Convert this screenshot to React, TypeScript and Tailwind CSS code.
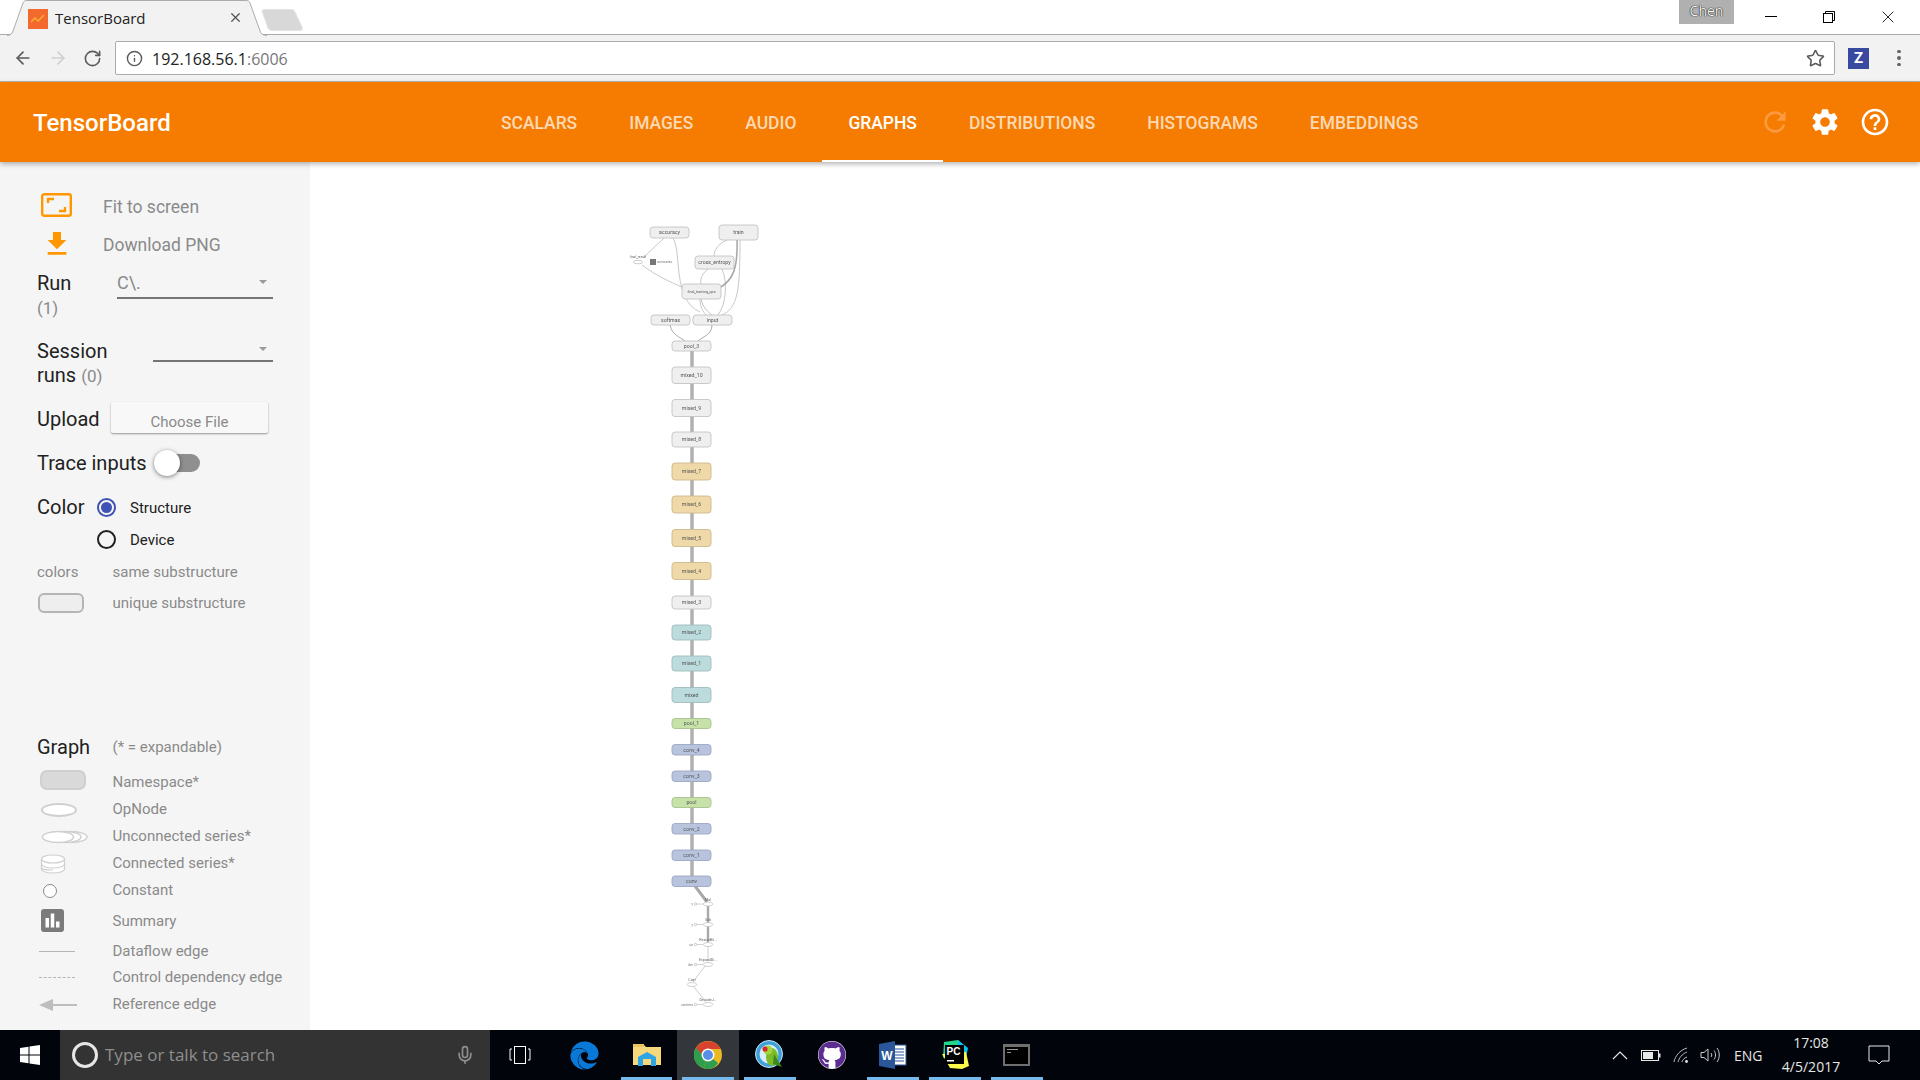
import { ArrowLeft, ArrowRight, Info, Mic, RotateCw, Star, X } from "lucide-react";
import { FaEdge, FaGithub } from "react-icons/fa";
import { MdFileDownload, MdHelpOutline, MdRefresh, MdSettings, MdBarChart } from "react-icons/md";

const tabs = ["SCALARS", "IMAGES", "AUDIO", "GRAPHS", "DISTRIBUTIONS", "HISTOGRAMS", "EMBEDDINGS"];

const white = { fill: "#efefef", stroke: "#c4c4c4" };
const orange = { fill: "#f0d9a8", stroke: "#cdb98d" };
const teal = { fill: "#bcdbdc", stroke: "#9fbcbd" };
const green = { fill: "#c6e2a9", stroke: "#a7c290" };
const blue = { fill: "#b8c3de", stroke: "#9ca7c2" };

// page coordinates, svg viewBox lines up with the page
const nodes = [
  { name: "accuracy", x: 650, y: 227, w: 39, h: 11, c: white },
  { name: "train", x: 719, y: 225, w: 39, h: 15, c: white },
  { name: "cross_entropy", x: 695, y: 256, w: 39, h: 13, c: white },
  { name: "final_training_ops", x: 682, y: 284, w: 39, h: 15, c: white, small: true },
  { name: "softmax", x: 651, y: 315, w: 39, h: 10, c: white },
  { name: "input", x: 693, y: 315, w: 39, h: 10, c: white },
  { name: "pool_3", x: 672, y: 341, w: 39, h: 10, c: white },
  { name: "mixed_10", x: 672, y: 367, w: 39, h: 16.5, c: white },
  { name: "mixed_9", x: 672, y: 399.5, w: 39, h: 17, c: white },
  { name: "mixed_8", x: 672, y: 432, w: 39, h: 15, c: white },
  { name: "mixed_7", x: 672, y: 463, w: 39, h: 17, c: orange },
  { name: "mixed_6", x: 672, y: 496, w: 39, h: 17, c: orange },
  { name: "mixed_5", x: 672, y: 529.5, w: 39, h: 17, c: orange },
  { name: "mixed_4", x: 672, y: 562.5, w: 39, h: 17, c: orange },
  { name: "mixed_3", x: 672, y: 596, w: 39, h: 13, c: white },
  { name: "mixed_2", x: 672, y: 625, w: 39, h: 15, c: teal },
  { name: "mixed_1", x: 672, y: 656, w: 39, h: 15, c: teal },
  { name: "mixed", x: 672, y: 687.5, w: 39, h: 15, c: teal },
  { name: "pool_1", x: 672, y: 718.5, w: 39, h: 10, c: green },
  { name: "conv_4", x: 672, y: 744.5, w: 39, h: 10.5, c: blue },
  { name: "conv_3", x: 672, y: 771, w: 39, h: 10.5, c: blue },
  { name: "pool", x: 672, y: 797.5, w: 39, h: 10, c: green },
  { name: "conv_2", x: 672, y: 823.5, w: 39, h: 10.5, c: blue },
  { name: "conv_1", x: 672, y: 850, w: 39, h: 10.5, c: blue },
  { name: "conv", x: 672, y: 876, w: 39, h: 10.5, c: blue },
];

const thinEdges = [
  "M673 238 C682 252 672 300 700 312",
  "M664 238 L643 258",
  "M642 265 C655 275 670 282 682 287",
  "M727 240 C718 244 714 250 714 256",
  "M740 240 C740 290 738 308 722 315",
  "M708 269 C702 274 700 279 701 284",
  "M722 269 C728 282 726 305 718 315",
  "M700 299 C700 306 703 312 706 315",
];

const opNodes = [
  { name: "Mul", y: 904, x: 708, side: "y" },
  { name: "Sub", y: 924.5, x: 708, side: "y" },
  { name: "ResizeBil...", y: 944.5, x: 708, side: "siz" },
  { name: "ExpandDi...", y: 964.5, x: 708, side: "dim" },
  { name: "Cast", y: 984.5, x: 692, side: "" },
  { name: "DecodeJ...", y: 1004.5, x: 708, side: "contents" },
];

function GraphCanvas() {
  return (
    <svg viewBox="310 162 1610 868" className="w-full h-full blur-[0.6px]">
      <g fill="none">
        <line x1="692" y1="350" x2="692" y2="876" stroke="#b0b0b0" strokeWidth="3.5" />
        {thinEdges.map((d) => (
          <path key={d} d={d} stroke="#c2c2c2" strokeWidth="0.9" />
        ))}
        <path d="M737 240 C738 270 732 280 721 287" stroke="#a8a8a8" strokeWidth="1.6" />
        <path d="M701 299 C703 308 708 312 712 315" stroke="#b0b0b0" strokeWidth="0.8" />
        <path d="M670 325 C672 335 680 337 685 341" stroke="#a8a8a8" strokeWidth="1" />
        <path d="M712 325 C712 335 702 337 698 341" stroke="#a8a8a8" strokeWidth="1" />
        <path d="M695 886 L707 902" stroke="#a8a8a8" strokeWidth="3" />
        <path d="M708 906 L708 942" stroke="#a8a8a8" strokeWidth="2.4" />
        <path d="M708 946 L708 962" stroke="#c2c2c2" strokeWidth="0.8" />
        <path d="M705 966 L693 982 M694 987 L706 1002" stroke="#c2c2c2" strokeWidth="0.8" />
      </g>
      {nodes.map((n) => (
        <g key={n.name}>
          <rect x={n.x} y={n.y} width={n.w} height={n.h} rx="3" fill={n.c.fill} stroke={n.c.stroke} strokeWidth="0.9" />
          <text
            x={n.x + n.w / 2}
            y={n.y + n.h / 2 + 1.8}
            textAnchor="middle"
            fontSize={n.small ? "3.6" : "5.2"}
            fill="#555"
            fontFamily="Roboto, sans-serif"
          >
            {n.name}
          </text>
        </g>
      ))}
      {/* final_result with its summary icon */}
      <ellipse cx="638" cy="262" rx="4.5" ry="1.8" fill="#fff" stroke="#aaa" strokeWidth="0.6" />
      <text x="638" y="258" textAnchor="middle" fontSize="3.4" fill="#666" fontFamily="Roboto, sans-serif">final_result</text>
      <rect x="650" y="259" width="6" height="6" fill="#777" />
      <text x="657" y="263" fontSize="3" fill="#777" fontFamily="Roboto, sans-serif">summaries</text>
      {opNodes.map((o) => (
        <g key={o.name}>
          <ellipse cx={o.x} cy={o.y} rx="4.8" ry="2" fill="#fff" stroke="#b4b4b4" strokeWidth="0.6" />
          <text x={o.x} y={o.y - 3.5} textAnchor="middle" fontSize="3.6" fill="#666" fontFamily="Roboto, sans-serif">{o.name}</text>
          {o.side && (
            <g>
              <circle cx="695.5" cy={o.y} r="1.2" fill="#fff" stroke="#999" strokeWidth="0.5" />
              <line x1="697" y1={o.y} x2="703" y2={o.y} stroke="#aaa" strokeWidth="0.5" />
              <text x="693" y={o.y + 1} textAnchor="end" fontSize="3" fill="#777" fontFamily="Roboto, sans-serif">{o.side}</text>
            </g>
          )}
        </g>
      ))}
    </svg>
  );
}

function FitIcon() {
  return (
    <svg viewBox="0 0 31 24" className="w-[31px] h-[24px] mb-[3px]">
      <rect x="1.2" y="1.2" width="28.6" height="21.6" rx="2" fill="none" stroke="#ff9800" strokeWidth="2.4" />
      <path d="M7 10V6H13M24 14V18H18" fill="none" stroke="#ff9800" strokeWidth="2.4" />
    </svg>
  );
}

function Caret() {
  return <div className="w-0 h-0 border-x-[4px] border-x-transparent border-t-[4px] border-t-[#9a9a9a]" />;
}

function LegendIcon({ kind }: { kind: string }) {
  if (kind === "ns") return <div className="ml-[3px] mb-[6px] w-[46px] h-[20px] rounded-[7px] bg-[#d9d9d9] border-2 border-[#cfcfcf]" />;
  if (kind === "op") return <div className="ml-[4px] w-[36px] h-[14px] rounded-[50%] bg-white border-2 border-[#cfcfcf]" />;
  if (kind === "unconnected")
    return (
      <svg width="48" height="14" viewBox="0 0 48 14" className="ml-[4px]">
        <ellipse cx="30" cy="7" rx="16" ry="5.5" fill="#fff" stroke="#cfcfcf" strokeWidth="1.5" />
        <ellipse cx="24" cy="7" rx="16" ry="5.5" fill="#fff" stroke="#cfcfcf" strokeWidth="1.5" />
        <ellipse cx="17" cy="7" rx="15.5" ry="5.5" fill="#fff" stroke="#cfcfcf" strokeWidth="1.5" />
      </svg>
    );
  if (kind === "connected")
    return (
      <svg width="26" height="20" viewBox="0 0 26 20" className="ml-[3px]">
        <path d="M1.5 5V15C1.5 17 6 19 13 19S24.5 17 24.5 15V5" fill="#fff" stroke="#cfcfcf" strokeWidth="1.2" />
        <path d="M1.5 10C1.5 12 6 14 13 14S24.5 12 24.5 10M1.5 14C1.5 15 6 16 13 16" fill="none" stroke="#cfcfcf" strokeWidth="1.2" />
        <ellipse cx="13" cy="5" rx="11.5" ry="4" fill="#fff" stroke="#cfcfcf" strokeWidth="1.2" />
      </svg>
    );
  if (kind === "const") return <div className="ml-[6px] w-[14px] h-[14px] rounded-full bg-white border-[1.5px] border-[#8a8a8a]" />;
  if (kind === "summary")
    return (
      <div className="ml-[4px] mb-[3px] w-[23px] h-[23px] rounded-[3px] bg-[#7b7b7b] flex items-center justify-center">
        <MdBarChart className="text-white" size={21} />
      </div>
    );
  if (kind === "flow") return <div className="ml-[2px] w-[36px] h-px bg-[#b5b5b5]" />;
  if (kind === "control") return <div className="ml-[2px] w-[36px] border-t border-dashed border-[#b5b5b5]" />;
  return (
    <svg width="38" height="14" viewBox="0 0 38 14" className="ml-[2px]">
      <path d="M0 7L14 1V6H38V8H14V13Z" fill="#bdbdbd" />
    </svg>
  );
}

const legend = [
  { kind: "ns", label: "Namespace*", h: "h-[27px]" },
  { kind: "op", label: "OpNode", h: "h-[27px]" },
  { kind: "unconnected", label: "Unconnected series*", h: "h-[27px]" },
  { kind: "connected", label: "Connected series*", h: "h-[27px]" },
  { kind: "const", label: "Constant", h: "h-[27px]" },
  { kind: "summary", label: "Summary", h: "h-[35px]" },
  { kind: "flow", label: "Dataflow edge", h: "h-[25px]" },
  { kind: "control", label: "Control dependency edge", h: "h-[27px]" },
  { kind: "reference", label: "Reference edge", h: "h-[27px]" },
];

function Sidebar() {
  return (
    <aside className="w-[310px] shrink-0 bg-[#f5f5f5] pt-[26px] pl-[37px] text-[#212121]">
      <div className="h-[37px] flex items-center text-[17.5px] text-[#8a8a8a]">
        <div className="w-[66px] pl-[4px]"><FitIcon /></div>
        <span className="pt-[2px]">Fit to screen</span>
      </div>
      <div className="h-[37px] flex items-center text-[17.5px] text-[#8a8a8a]">
        <div className="w-[66px] pl-[4px]"><MdFileDownload className="text-[#ff9800]" size={32} /></div>
        <span className="pt-[4px]">Download PNG</span>
      </div>

      <div className="h-[38px] mt-[2px] flex items-center">
        <span className="w-[80px] text-[20px]">Run</span>
        <div className="w-[156px] h-[32px] border-b-2 border-[#757575] flex items-center justify-between pr-[6px] text-[18px] text-[#8a8a8a]">
          C\.
          <Caret />
        </div>
      </div>
      <div className="h-[14px] flex items-center text-[17px] text-[#8a8a8a]">(1)</div>

      <div className="mt-[22px] w-[236px] text-[20px] leading-[25px]">
        <div className="h-[25px] flex justify-between items-center">
          <span className="pt-[2px]">Session</span>
          <div className="w-[120px] h-[24px] mt-[-2px] border-b-2 border-[#757575] flex items-center justify-end pr-[6px]">
            <Caret />
          </div>
        </div>
        <div>runs <span className="text-[17px] text-[#8a8a8a]">(0)</span></div>
      </div>

      <div className="mt-[13px] h-[31px] flex items-center">
        <span className="w-[74px] pt-[2px] text-[20px]">Upload</span>
        <button className="w-[157px] h-[31px] bg-[#f8f8f8] rounded-[2px] shadow-[0_1px_2px_rgba(0,0,0,0.4)] pt-[9px] text-[15px] text-[#8a8a8a]">
          Choose File
        </button>
      </div>

      <div className="mt-[15px] h-[30px] flex items-center text-[20px]">
        Trace inputs
        <div className="relative ml-[19px] w-[34px] h-[18px] rounded-full bg-[#8f8f8f]">
          <div className="absolute left-[-12px] top-[-4px] w-[26px] h-[26px] rounded-full bg-white shadow-[0_1px_4px_rgba(0,0,0,0.5)]" />
        </div>
      </div>

      <div className="mt-[14px] h-[32px] flex items-center text-[20px]">
        <span className="w-[60px] pb-[2px]">Color</span>
        <div className="w-[19px] h-[19px] mb-[1px] rounded-full border-2 border-[#3f51b5] flex items-center justify-center">
          <div className="w-[11px] h-[11px] rounded-full bg-[#3f51b5]" />
        </div>
        <span className="ml-[14px] text-[15px]">Structure</span>
      </div>
      <div className="h-[32px] flex items-center">
        <div className="ml-[60px] w-[19px] h-[19px] mb-[1px] rounded-full border-2 border-[#212121]" />
        <span className="ml-[14px] text-[15px]">Device</span>
      </div>

      <div className="h-[31px] pt-[2px] flex items-center text-[15px] text-[#8a8a8a]">
        <span className="w-[75.5px]">colors</span>
        same substructure
      </div>
      <div className="h-[31px] flex items-center text-[15px] text-[#8a8a8a]">
        <div className="w-[75.5px]">
          <div className="ml-[1px] w-[46px] h-[20px] rounded-[6px] bg-[#eeeeee] border-2 border-[#b5b5b5]" />
        </div>
        <span className="pt-[2px]">unique substructure</span>
      </div>

      <div className="mt-[114px] h-[30px] flex items-center">
        <span className="w-[75.5px] text-[20px]">Graph</span>
        <span className="text-[15px] text-[#8a8a8a]">(* = expandable)</span>
      </div>
      <div className="mt-[7px]">
        {legend.map((row) => (
          <div key={row.label} className={`${row.h} flex items-center text-[15px] text-[#8a8a8a]`}>
            <div className="w-[75.5px] shrink-0 flex items-center"><LegendIcon kind={row.kind} /></div>
            {row.label}
          </div>
        ))}
      </div>
    </aside>
  );
}

function ChromeLogo() {
  return (
    <svg viewBox="0 0 28 28" className="w-[28px] h-[28px]">
      <circle cx="14" cy="14" r="14" fill="#e8b923" />
      <path d="M14 14L2 6.5A14 14 0 0 0 9.5 27.3Z" fill="#2f9e4f" />
      <path d="M14 14L9.5 27.3A14 14 0 0 0 14 28C19 28 22 25 24 22Z" fill="#2f9e4f" />
      <path d="M2 7A14 14 0 0 1 26.5 8H14C10 8 8 11 8 13Z" fill="#d8432f" />
      <circle cx="14" cy="14" r="6.5" fill="#fff" />
      <circle cx="14" cy="14" r="5" fill="#5a8fe6" />
    </svg>
  );
}

function FolderIcon() {
  return (
    <svg viewBox="0 0 28 24" className="w-[28px] h-[24px]">
      <path d="M0 2H11L13 4H28V22H0Z" fill="#f6d77c" />
      <rect x="0" y="1" width="11" height="3" fill="#e8c35e" />
      <path d="M5 23V14L14 9L23 14V23H18V16H10V23Z" fill="#2ea6e6" />
    </svg>
  );
}

function ParrotIcon() {
  return (
    <svg viewBox="0 0 30 30" className="w-[30px] h-[30px]">
      <circle cx="14" cy="14" r="13.5" fill="#3f9fd8" stroke="#c7e5f6" strokeWidth="1" />
      <circle cx="14" cy="14" r="9.5" fill="#d8eefa" />
      <ellipse cx="17" cy="17" rx="6" ry="9" fill="#7dbb2a" />
      <circle cx="13" cy="10" r="4.5" fill="#a2d63c" />
      <circle cx="10" cy="9" r="2.6" fill="#d8262c" />
      <path d="M19 14L27 27L18 24Z" fill="#3f8a1d" />
    </svg>
  );
}

function WordIcon() {
  return (
    <svg viewBox="0 0 28 28" className="w-[28px] h-[28px]">
      <rect x="13" y="4" width="14" height="20" fill="#fff" stroke="#2b579a" strokeWidth="1" />
      <path d="M15 8H25M15 11H25M15 14H25M15 17H25M15 20H25" stroke="#2b579a" strokeWidth="1.2" />
      <path d="M0 3L16 0V28L0 25Z" fill="#2b579a" />
      <text x="8" y="19" textAnchor="middle" fontSize="12" fontWeight="700" fill="#fff" fontFamily="Liberation Sans, sans-serif">W</text>
    </svg>
  );
}

function PyCharmIcon() {
  return (
    <svg viewBox="0 0 30 30" className="w-[30px] h-[30px]">
      <path d="M4 2L18 0L22 4L3 18Z" fill="#21d789" />
      <path d="M18 0L28 8L26 18L18 8Z" fill="#07c3f2" />
      <path d="M2 14L10 28L22 29L29 26L26 12Z" fill="#fcf84a" />
      <rect x="5" y="5" width="19" height="19" fill="#000" />
      <text x="6.5" y="15" fontSize="10" fontWeight="700" fill="#fff" fontFamily="Liberation Sans, sans-serif">PC</text>
      <rect x="7" y="20" width="7" height="1.5" fill="#fff" />
    </svg>
  );
}

function TerminalIcon() {
  return (
    <div className="w-[27px] h-[22px] bg-black border-2 border-[#6f6f6f] border-t-[3px] pl-[2px] pt-[2px]">
      <div className="w-[11px] h-px bg-[#999]" />
      <div className="mt-[2px] w-[4px] h-px bg-[#999]" />
    </div>
  );
}

function TaskbarIcon({ children, open, active }: { children: React.ReactNode; open?: boolean; active?: boolean }) {
  return (
    <div className={`relative w-[61.7px] h-[50px] flex items-center justify-center ${active ? "bg-[#33363a]" : ""}`}>
      {children}
      {open && <div className="absolute left-[5px] right-[5px] bottom-0 h-[3px] bg-[#76b9ed]" />}
    </div>
  );
}

function Taskbar() {
  return (
    <footer className="h-[50px] bg-[#01040a] flex items-center font-['Open_Sans',sans-serif] text-white">
      <div className="w-[60px] flex justify-center">
        <svg viewBox="0 0 20 20" className="w-[20px] h-[20px]">
          <path d="M0 3L8.5 1.8V9.5H0ZM9.5 1.6L20 0V9.5H9.5ZM0 10.5H8.5V18.2L0 17ZM9.5 10.5H20V20L9.5 18.4Z" fill="#fff" />
        </svg>
      </div>
      <div className="w-[430px] h-[50px] bg-[#333333] flex items-center pl-[12px] pr-[15px]">
        <div className="w-[26px] h-[26px] rounded-full border-[3px] border-[#e6e6e6]" />
        <span className="ml-[7px] text-[17px] text-[#8e8e8e]">Type or talk to search</span>
        <Mic className="ml-auto text-[#8e8e8e]" size={20} />
      </div>
      <div className="w-[60px] flex justify-center">
        <svg width="22" height="18" viewBox="0 0 22 18" fill="none" stroke="#fff" strokeWidth="1">
          <rect x="5.5" y=".5" width="11" height="17" />
          <path d="M3 3H1V14H3M19 3H21V14H19" />
        </svg>
      </div>
      <div className="ml-[4px] flex">
        <TaskbarIcon><FaEdge className="text-[#0a78d7]" size={29} /></TaskbarIcon>
        <TaskbarIcon open><FolderIcon /></TaskbarIcon>
        <TaskbarIcon open active><ChromeLogo /></TaskbarIcon>
        <TaskbarIcon open><ParrotIcon /></TaskbarIcon>
        <TaskbarIcon>
          <div className="w-[28px] h-[28px] rounded-full bg-white flex items-center justify-center">
            <FaGithub className="text-[#5c2d91]" size={28} />
          </div>
        </TaskbarIcon>
        <TaskbarIcon open><WordIcon /></TaskbarIcon>
        <TaskbarIcon open><PyCharmIcon /></TaskbarIcon>
        <TaskbarIcon open><TerminalIcon /></TaskbarIcon>
      </div>
      <div className="ml-auto flex items-center h-full text-[#e6e6e6]">
        <svg width="16" height="9" viewBox="0 0 16 9" fill="none" stroke="#e6e6e6" strokeWidth="1.2"><path d="M1 8L8 1L15 8" /></svg>
        <svg width="20" height="11" viewBox="0 0 20 11" className="ml-[13px]">
          <rect x="0.5" y="0.5" width="17" height="10" fill="none" stroke="#e6e6e6" />
          <rect x="2" y="2" width="10" height="7" fill="#e6e6e6" />
          <rect x="18" y="3.5" width="1.5" height="4" fill="#e6e6e6" />
        </svg>
        <svg width="16" height="16" viewBox="0 0 16 16" fill="none" stroke="#bbb" strokeWidth="1" className="ml-[12px]">
          <path d="M1 15C2 9 7 3 14 1M5 15C6 11 9 7 14 5M9 15C9.5 13 11 11 14 10" />
          <circle cx="13.5" cy="14.5" r="1.4" fill="#e6e6e6" stroke="none" />
        </svg>
        <svg width="20" height="16" viewBox="0 0 20 16" fill="none" stroke="#ccc" strokeWidth="1" className="ml-[11px]">
          <path d="M1 5.5H4L8 2V14L4 10.5H1Z" />
          <path d="M11 6C12 7 12 9 11 10M14 3.5C16 6 16 10 14 12.5M17 1C20 5 20 11 17 15" />
        </svg>
        <span className="ml-[14px] w-[36px] text-[14px]">ENG</span>
        <div className="w-[84px] pr-[2px] text-center text-[14px] leading-[24px]">
          <div>17:08</div>
          <div>4/5/2017</div>
        </div>
        <div className="w-[66px] pl-[14px] pr-[6px] flex items-center">
          <svg width="22" height="20" viewBox="0 0 22 20" fill="none" stroke="#e6e6e6" strokeWidth="1">
            <path d="M1 1H21V16H14L11 19L8 16H1Z" />
          </svg>
        </div>
      </div>
    </footer>
  );
}

export default function App() {
  return (
    <div className="w-[1920px] h-[1080px] flex flex-col overflow-hidden bg-white font-[Roboto,sans-serif]">
      {/* browser tab strip */}
      <div className="relative h-[35px] shrink-0 bg-white border-b border-[#ababab]">
        <svg className="absolute left-[6px] top-0" width="262" height="36" viewBox="0 0 262 36">
          <path d="M1 35.5C4 35.5 6 34 7 31L17 3C18 1 19 .5 21 .5H240C242 .5 243 1 244 3L254 31C255 34 257 35.5 261 35.5" fill="#f2f2f2" stroke="#ababab" />
        </svg>
        <div className="absolute left-[28px] top-[9px] w-[20px] h-[20px] bg-[#f4692d] flex items-center justify-center">
          <svg width="14" height="10" viewBox="0 0 14 10" fill="none" stroke="#f9b233" strokeWidth="1.4"><path d="M0 8L4 4L7 7L13 1" /></svg>
        </div>
        <span className="absolute left-[55px] top-[7px] text-[15px] text-[#222] font-['Open_Sans',sans-serif]">TensorBoard</span>
        <X className="absolute left-[228px] top-[10px] text-[#555]" size={15} />
        <svg className="absolute left-[261px] top-[9px]" width="45" height="22" viewBox="0 0 45 22">
          <path d="M1 2C1 1 2 .5 3 .5H30C32 .5 33 1 34 3L41 18C42 20 41 21.5 39 21.5H11C9 21.5 8 20.5 7 19Z" fill="#d8d8d8" stroke="#e4e4e4" />
        </svg>
        <div className="absolute left-[1679px] top-0 w-[55px] h-[24px] bg-[#b0b0b0] text-center text-[14px] leading-[22px] text-[#f4f4f4] [text-shadow:0_0_1px_#000,0_0_1px_#000] font-['Open_Sans',sans-serif]">Chen</div>
        <div className="absolute left-[1765px] top-[16px] w-[12px] h-px bg-black" />
        <svg className="absolute left-[1823px] top-[11px]" width="12" height="12" viewBox="0 0 12 12" fill="none" stroke="#000"><rect x=".5" y="2.5" width="9" height="9" /><path d="M2.5 2.5V.5H11.5V9.5H9.5" /></svg>
        <X className="absolute left-[1878px] top-[7px] text-black" size={20} strokeWidth={1} />
      </div>

      {/* browser toolbar */}
      <div className="h-[47px] shrink-0 bg-[#f2f2f2] border-b border-[#b5b5b5] flex items-center">
        <div className="w-[115px] shrink-0 flex items-center pl-[13px] gap-[15px]">
          <ArrowLeft className="text-[#5a5a5a]" size={20} />
          <ArrowRight className="text-[#cfcfcf]" size={20} />
          <RotateCw className="text-[#5a5a5a]" size={19} />
        </div>
        <div className="w-[1720px] h-[34px] bg-white border border-[#ababab] rounded-[2px] flex items-center pl-[10px] pr-[9px] font-['Open_Sans',sans-serif]">
          <Info className="text-[#5a5a5a]" size={17} />
          <span className="ml-[9px] pt-[1px] text-[16px] text-[#222]">192.168.56.1<span className="text-[#777]">:6006</span></span>
          <Star className="ml-auto text-[#5a5a5a]" size={19} />
        </div>
        <div className="ml-[13px] w-[21px] h-[21px] bg-[#3949a0] text-white text-[15px] font-bold flex items-center justify-center">Z</div>
        <div className="ml-[28px] flex flex-col gap-[3px]">
          <div className="w-[3.5px] h-[3.5px] rounded-full bg-[#666]" />
          <div className="w-[3.5px] h-[3.5px] rounded-full bg-[#666]" />
          <div className="w-[3.5px] h-[3.5px] rounded-full bg-[#666]" />
        </div>
      </div>

      {/* TensorBoard header */}
      <header className="relative z-10 h-[80px] shrink-0 bg-[#f57c00] flex items-stretch shadow-[0_2px_5px_rgba(0,0,0,0.3)]">
        <div className="w-[475px] shrink-0 pl-[33px] pt-[1px] flex items-center text-[24px] font-medium text-white">TensorBoard</div>
        {tabs.map((tab) => (
          <div
            key={tab}
            className={`px-[26px] pt-[4px] border-b-2 flex items-center text-[17.45px] font-medium ${
              tab === "GRAPHS" ? "text-white border-white" : "text-[#fdd9b5] border-transparent"
            }`}
          >
            {tab}
          </div>
        ))}
        <div className="ml-auto flex items-center pr-[29px] gap-[18px] text-white">
          <MdRefresh className="text-[#fb9a3f]" size={32} />
          <MdSettings size={32} />
          <MdHelpOutline size={32} />
        </div>
      </header>

      <div className="flex-1 flex min-h-0">
        <Sidebar />
        <main className="flex-1 min-w-0 bg-white">
          <GraphCanvas />
        </main>
      </div>

      <Taskbar />
    </div>
  );
}
